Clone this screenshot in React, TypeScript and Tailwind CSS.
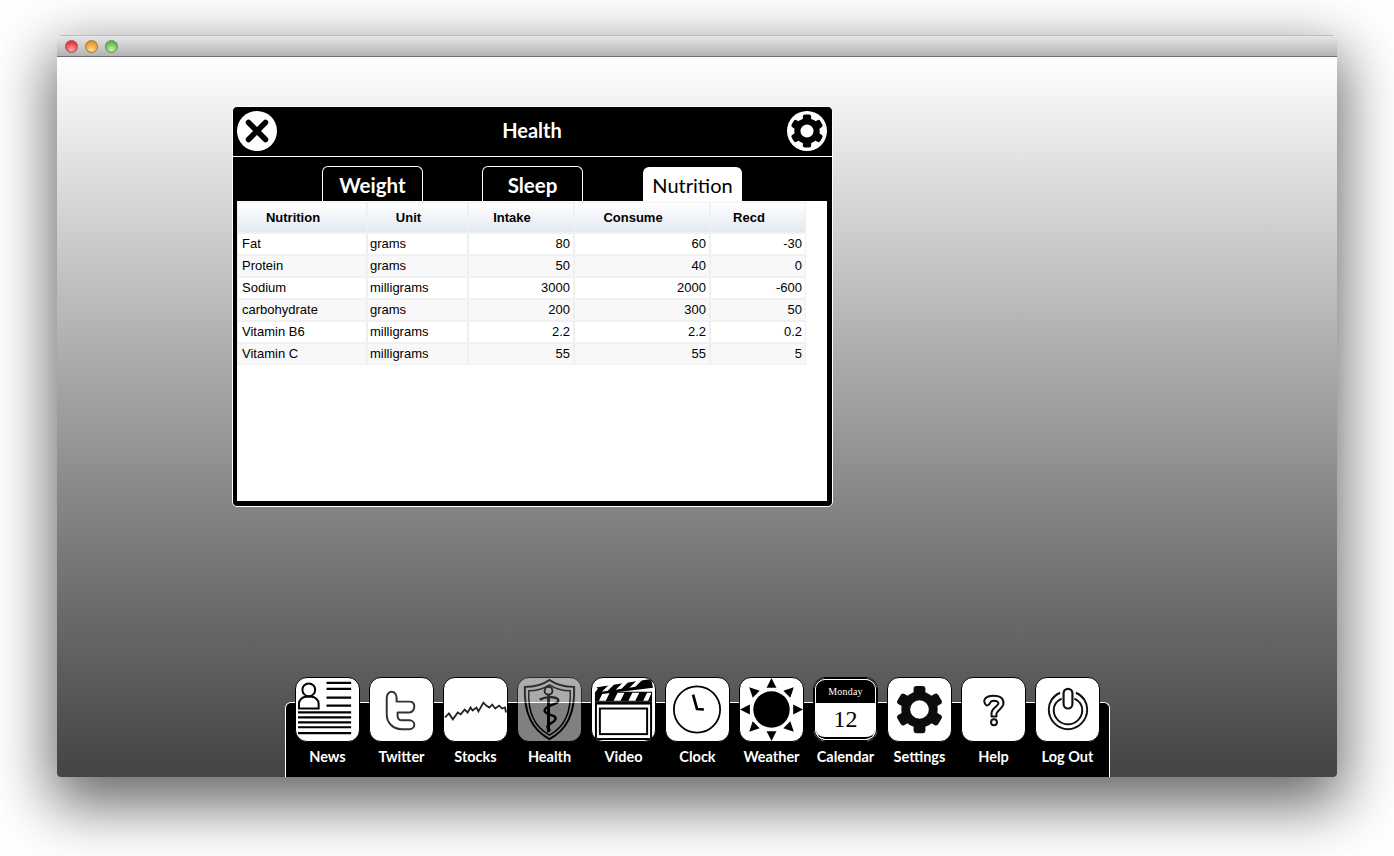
import React from "react";

const rows = [
  ["Fat", "grams", "80", "60", "-30"],
  ["Protein", "grams", "50", "40", "0"],
  ["Sodium", "milligrams", "3000", "2000", "-600"],
  ["carbohydrate", "grams", "200", "300", "50"],
  ["Vitamin B6", "milligrams", "2.2", "2.2", "0.2"],
  ["Vitamin C", "milligrams", "55", "55", "5"],
];

const headers = ["Nutrition", "Unit", "Intake", "Consume", "Recd"];

const Gear = ({ color = "#000", hole = "#fff" }: { color?: string; hole?: string }) => (
  <g>
    {[0, 60, 120, 180, 240, 300].map((a) => (
      <rect key={a} x="-6" y="-24" width="12" height="12" rx="3" fill={color} transform={`rotate(${a})`} />
    ))}
    <circle r="18.5" fill={color} />
    <circle r="9.5" fill={hole} />
  </g>
);

const NewsIcon = () => (
  <svg viewBox="0 0 64 64" className="h-full w-full">
    <circle cx="13" cy="12" r="6.500" fill="none" stroke="#000" strokeWidth="2" />
    <path d="M3 31v-5c0-4 4-7 7-7h6c3 0 7 3 7 7v5z" fill="#fff" stroke="#000" strokeWidth="2" />
    <path d="M31 5h25M31 11h25M31 20h25M31 28h25" stroke="#000" strokeWidth="2.200" />
    <path d="M2 35h54M2 40h54M2 45h54M2 50h54M2 56h54" stroke="#000" strokeWidth="2.200" />
  </svg>
);

const TwitterIcon = () => (
  <svg viewBox="0 0 64 64" className="h-full w-full">
    <path
      d="M17 20c0-3 2-6 5-6s5 3 5 6v4h13c3 0 5 2 5 5s-2 6-5 6H28v3c0 3 2 5 5 5h7c3 0 5 2 5 4.500S43 52 40 52h-8C23 52 17 45 17 37z"
      fill="none"
      stroke="#333"
      strokeWidth="2"
      strokeLinejoin="round"
    />
  </svg>
);

const StocksIcon = () => (
  <svg viewBox="0 0 64 64" className="h-full w-full">
    <path
      d="M1 40l4-4 4 6 5-7 3 2 4-5 3 3 3-5 2 3 4-3 2 4 5-9 3 3 3 2 3-3 3 4 4-3 3 3 3-1 1 5"
      fill="none"
      stroke="#222"
      strokeWidth="1.800"
    />
  </svg>
);

const HealthIcon = () => (
  <svg viewBox="0 0 64 64" className="h-full w-full" fill="none" stroke="#000">
    <path d="M32 2c7 5 15 7 25 7 1 22-4 42-25 53C11 51 6 31 7 9c10 0 18-2 25-7z" strokeWidth="2" />
    <path d="M32 7c6 4 13 6 21 6 1 19-4 36-21 45C15 49 10 32 11 13c8 0 15-2 21-6z" strokeWidth="1.500" />
    <circle cx="31" cy="13" r="4" strokeWidth="2" />
    <path d="M31 17v38" strokeWidth="3" />
    <path d="M22 22c8-4 19-3 19 1s-14 5-14 10 13 4 11 9-9 4-8 8 3 2 3 2" strokeWidth="2.500" />
  </svg>
);

const VideoIcon = () => (
  <svg viewBox="0 0 64 64" className="h-full w-full">
    <rect x="3" y="24" width="58" height="39" rx="1" fill="#000" />
    <rect x="5" y="27" width="54" height="34" fill="#fff" />
    <rect x="7" y="30" width="50" height="28" fill="#000" />
    <rect x="9" y="32" width="46" height="24" fill="#fff" />
    <path d="M3 14h58v10H3z" fill="#000" />
    <path d="M7 23l4-8h7l-4 8zM22 23l4-8h7l-4 8zM37 23l4-8h7l-4 8zM52 23l4-8h4v1l-3 7z" fill="#fff" />
    <path d="M2 10L60 1l2 9-58 7z" fill="#000" />
    <path d="M10 14l7-7 6-1-7 7zM24 12l7-7 6-1-7 7zM38 10l7-7 6-1-7 7z" fill="#fff" />
    <path d="M1 6l5 5-4 5z" fill="#fff" />
  </svg>
);

const ClockIcon = () => (
  <svg viewBox="0 0 64 64" className="h-full w-full">
    <circle cx="31.500" cy="32" r="23.500" fill="none" stroke="#000" strokeWidth="1.800" />
    <path d="M27.500 17l4 14.500 7 .5" fill="none" stroke="#000" strokeWidth="2.800" />
  </svg>
);

const WeatherIcon = () => (
  <svg viewBox="0 0 64 64" className="h-full w-full">
    <circle cx="32" cy="32" r="18.500" fill="#000" />
    {[0, 45, 90, 135, 180, 225, 270, 315].map((a) => (
      <path key={a} d="M32 0l5 10H27z" fill="#000" transform={`rotate(${a} 32 32)`} />
    ))}
  </svg>
);

const CalendarIcon = () => (
  <div className="flex h-full w-full flex-col overflow-hidden rounded-[11px] bg-black p-[1px]">
    <div className="flex h-full flex-col overflow-hidden rounded-[10px] border border-white bg-white">
      <div className="flex h-[23px] items-center justify-center bg-black font-['Liberation_Serif',serif] text-[10px] tracking-[0.2px] text-white">
        Monday
      </div>
      <div className="flex flex-1 items-start justify-center rounded-b-[9px] border-b-2 border-black font-['Liberation_Serif',serif] text-[24px] leading-[33px] text-black">
        12
      </div>
    </div>
  </div>
);

const SettingsIcon = () => (
  <svg viewBox="-32 -32 64 64" className="h-full w-full">
    <Gear color="#0c0c0c" />
  </svg>
);

const HelpIcon = () => (
  <svg viewBox="0 0 64 64" className="h-full w-full" fill="none" stroke="#111" strokeWidth="2">
    <path d="M24 27c-3-4-1-9 8-9 8 0 11 4 10 9-1 4-6 6-7 9v3h-5v-4c1-5 7-7 7-9 0-2-2-3-5-3-2 0-3 1-4 3 0 1-3 3-4 1z" strokeLinejoin="round" />
    <circle cx="32.500" cy="45" r="3" />
  </svg>
);

const LogOutIcon = () => (
  <svg viewBox="0 0 64 64" className="h-full w-full" fill="none" stroke="#111" strokeWidth="2">
    <path d="M24.500 15C17 18 13 25 13 32c0 11 9 20 19.500 20S52 43 52 32c0-7-4-14-11.500-17" />
    <path d="M26 21c-5 2.500-8 7-8 11.500 0 8 6.500 14.500 14.500 14.500S47 40.500 47 32.500C47 28 44 23.500 39 21" />
    <rect x="28" y="11" width="9" height="20" rx="4.500" fill="#fff" strokeWidth="2.200" />
  </svg>
);

const dockItems: { label: string; icon: React.ReactNode; dim?: boolean }[] = [
  { label: "News", icon: <NewsIcon /> },
  { label: "Twitter", icon: <TwitterIcon /> },
  { label: "Stocks", icon: <StocksIcon /> },
  { label: "Health", icon: <HealthIcon />, dim: true },
  { label: "Video", icon: <VideoIcon /> },
  { label: "Clock", icon: <ClockIcon /> },
  { label: "Weather", icon: <WeatherIcon /> },
  { label: "Calendar", icon: <CalendarIcon /> },
  { label: "Settings", icon: <SettingsIcon /> },
  { label: "Help", icon: <HelpIcon /> },
  { label: "Log Out", icon: <LogOutIcon /> },
];

const Tab = ({ label, active }: { label: string; active?: boolean }) => (
  <div
    className={
      active
        ? "flex h-[34px] w-[99px] items-center justify-center rounded-t-[6px] bg-white pt-[2px] text-[20px] font-normal text-black"
        : "flex h-[35px] w-[101px] items-center justify-center rounded-t-[6px] border border-b-0 border-white bg-black pt-[2px] text-[20.5px] font-bold text-white"
    }
  >
    {label}
  </div>
);

const App = () => {
  return (
    <div className="h-[856px] w-[1394px] overflow-hidden bg-white px-[57px] pt-[35px] font-['Lato',sans-serif]">
      <div className="flex h-[742px] w-[1280px] flex-col overflow-hidden rounded-t-[5px] rounded-b-[4px] shadow-[0_22px_60px_6px_rgba(0,0,0,0.6)]">
        {/* title bar */}
        <div className="flex h-[22px] shrink-0 items-center gap-[7px] border-t border-b border-t-[#bdbdbd] border-b-[#6f6f6f] bg-gradient-to-b from-[#e6e6e6] to-[#b4b4b4] pl-[8px]">
          <span className="h-[13px] w-[13px] rounded-full border border-[#8f5555] bg-[radial-gradient(circle_at_50%_80%,#ffb0b0,#e8343c_70%)]" />
          <span className="h-[13px] w-[13px] rounded-full border border-[#94774a] bg-[radial-gradient(circle_at_50%_80%,#ffdd90,#ea962c_70%)]" />
          <span className="h-[13px] w-[13px] rounded-full border border-[#5f8a50] bg-[radial-gradient(circle_at_50%_80%,#c8f5ae,#66b54a_70%)]" />
        </div>

        {/* desktop */}
        <div className="flex flex-1 flex-col bg-gradient-to-b from-white to-[#444444] pt-[49px]">
          {/* health panel */}
          <div className="ml-[175px] flex h-[401px] w-[601px] flex-col rounded-[5px] border border-white bg-black">
            <div className="flex h-[50px] shrink-0 items-center justify-between border-b border-white pr-[5px] pb-[1px] pl-[4px]">
              <svg viewBox="0 0 40 40" className="h-[40px] w-[40px]">
                <circle cx="20" cy="20" r="20" fill="#fff" />
                <path d="M11.500 11.500l17 17M28.500 11.500l-17 17" stroke="#000" strokeWidth="5.500" strokeLinecap="round" />
              </svg>
              <span className="pb-[2px] text-[20px] font-bold text-white">Health</span>
              <svg viewBox="-32 -32 64 64" className="h-[40px] w-[40px]">
                <circle r="32" fill="#fff" />
                <g transform="scale(1.100)">
                  <Gear color="#000" />
                </g>
              </svg>
            </div>
            <div className="flex h-[44px] shrink-0 items-end pl-[89px]">
              <Tab label="Weight" />
              <div className="ml-[59px]">
                <Tab label="Sleep" />
              </div>
              <div className="ml-[60px]">
                <Tab label="Nutrition" active />
              </div>
            </div>
            <div className="mr-[5px] mb-[5px] ml-[4px] flex-1 bg-white pt-[1px] font-['Liberation_Sans',sans-serif] text-[13px] text-black">
              <div className="grid w-[569px] grid-cols-[128px_99px_104px_134px_94px] gap-[2px] bg-[#f0f0f0] p-[1px]">
                {headers.map((h) => (
                  <div
                    key={h}
                    className="flex h-[29px] items-center justify-center bg-gradient-to-b from-white to-[#e3e8f2] pr-[18px] font-bold"
                  >
                    {h}
                  </div>
                ))}
                {rows.map((row, r) =>
                  row.map((cell, c) => (
                    <div
                      key={`${r}-${c}`}
                      className={`flex h-[20px] items-center pr-[3px] ${c === 1 ? "pl-[2px]" : "pl-[4px]"} ${c > 1 ? "justify-end" : ""} ${r % 2 ? "bg-[#f8f8f8]" : "bg-white"}`}
                    >
                      {cell}
                    </div>
                  )),
                )}
              </div>
            </div>
          </div>

          {/* dock */}
          <div className="mt-auto ml-[228px] h-[75px] w-[825px] rounded-t-[6px] border-x border-t border-white bg-black">
            <div className="-mt-[26px] flex gap-[9px] pl-[9px]">
              {dockItems.map((item) => (
                <div key={item.label} className="flex w-[65px] flex-col items-center">
                  <div
                    className={`h-[65px] w-[65px] overflow-hidden rounded-[12px] border border-black bg-white ${item.dim ? "opacity-50" : ""}`}
                  >
                    {item.icon}
                  </div>
                  <span className="mt-[5px] text-[14.5px] leading-[20px] font-bold whitespace-nowrap text-white">
                    {item.label}
                  </span>
                </div>
              ))}
            </div>
          </div>
        </div>
      </div>
    </div>
  );
};

export default App;
